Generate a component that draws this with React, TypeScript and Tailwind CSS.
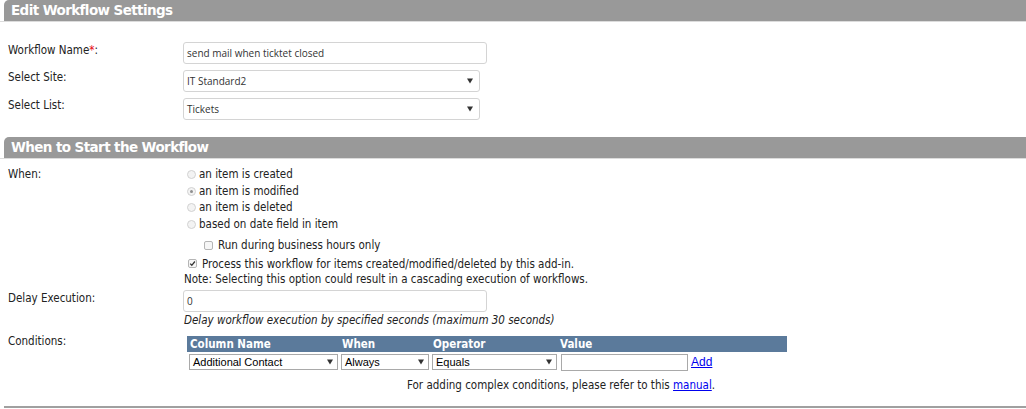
import React from 'react'

const bodyFont = "font-['DejaVu_Sans_Condensed','DejaVu_Sans',sans-serif]"

function Arrow() {
  return (
    <svg width="6" height="6" viewBox="0 0 6 6" className="shrink-0">
      <path d="M0 0.5h6L3 5.5z" fill="#333" />
    </svg>
  )
}

function Radio({ checked }: { checked?: boolean }) {
  return (
    <span className="w-[9px] h-[9px] rounded-full border border-[#d2d2d2] bg-[#f3f3f3] flex items-center justify-center mr-[3px] shrink-0">
      {checked && <span className="w-[3px] h-[3px] rounded-full bg-[#8f8f8f]" />}
    </span>
  )
}

function Check({ checked }: { checked?: boolean }) {
  return (
    <span className="w-[9px] h-[9px] rounded-[2px] border border-[#b5b5b5] bg-[#f6f6f6] flex items-center justify-center shrink-0">
      {checked && (
        <svg width="7" height="7" viewBox="0 0 7 7">
          <path d="M1.2 3.6l1.6 1.7L5.9 1.5" stroke="#333" strokeWidth="1.3" fill="none" />
        </svg>
      )}
    </span>
  )
}

function SectionHeader({ title }: { title: string }) {
  return (
    <div className="border-b border-[#dcdcdc]">
      <div className="ml-1 h-[21px] rounded-tl-[5px] bg-[#999999] pl-[7px] text-[13.5px] leading-[21px] font-bold text-white font-['DejaVu_Sans',sans-serif] tracking-[-0.6px]">
        {title}
      </div>
    </div>
  )
}

function Row({ label, children, className }: { label: React.ReactNode; children: React.ReactNode; className?: string }) {
  return (
    <div className={`flex ${className ?? ''}`}>
      <div className="w-[183px] shrink-0 pl-2 leading-[15px]">{label}</div>
      <div>{children}</div>
    </div>
  )
}

function TextBox({ value, width }: { value: string; width: string }) {
  return (
    <div className={`${width} h-[22px] rounded-[3px] border border-[#d4d4d4] flex items-center pl-[3px] text-[10px] text-[#333] font-['Open_Sans',sans-serif]`}>
      {value}
    </div>
  )
}

function SelectBox({ value }: { value: string }) {
  return (
    <div className="w-[297px] h-[22px] rounded-[3px] border border-[#d4d4d4] flex items-center justify-between pl-[3px] pr-[6px] text-[10px] text-[#333] font-['Open_Sans',sans-serif]">
      <span>{value}</span>
      <Arrow />
    </div>
  )
}

function SmallSelect({ value, width }: { value: string; width: string }) {
  return (
    <div className={`${width} h-[16px] border border-[#a9a9a9] flex items-center justify-between pl-[3px] pr-[4px] text-[11px] text-black font-['Liberation_Sans',sans-serif]`}>
      <span>{value}</span>
      <Arrow />
    </div>
  )
}

export default function App() {
  return (
    <div className={`w-[1026px] h-[409px] bg-white overflow-hidden text-[#222] text-[11.5px] ${bodyFont}`}>
      <SectionHeader title="Edit Workflow Settings" />

      <div className="flex flex-col gap-[6px] pt-[20px] pb-[17px]">
        <Row label={<span className="relative top-[1px]">Workflow Name<span className="text-red-600">*</span>:</span>}>
          <TextBox value="send mail when ticktet closed" width="w-[304px]" />
        </Row>
        <Row label="Select Site:">
          <SelectBox value="IT Standard2" />
        </Row>
        <Row label="Select List:">
          <SelectBox value="Tickets" />
        </Row>
      </div>

      <SectionHeader title="When to Start the Workflow" />

      <div className="pt-[7px]">
        <Row label={<span className="relative top-[1px]">When:</span>}>
          <div className="flex flex-col leading-[16.7px] pl-[4px]">
            <label className="flex items-center"><Radio />an item is created</label>
            <label className="flex items-center"><Radio checked />an item is modified</label>
            <label className="flex items-center"><Radio />an item is deleted</label>
            <label className="flex items-center"><Radio />based on date field in item</label>
            <label className="flex items-center gap-[5px] pl-[17px] mt-[4px]"><Check />Run during business hours only</label>
            <label className="flex items-center gap-[5px] pl-[1px] mt-[2px]"><Check checked />Process this workflow for items created/modified/deleted by this add-in.</label>
          </div>
          <div className="leading-[15px] pl-[1px]">Note: Selecting this option could result in a cascading execution of workflows.</div>
        </Row>

        <Row label={<span className="relative top-[1px]">Delay Execution:</span>} className="mt-[3px]">
          <TextBox value="0" width="w-[304px]" />
          <div className="italic leading-[15px] pt-[1px] pl-[1px]">Delay workflow execution by specified seconds (maximum 30 seconds)</div>
        </Row>

        <Row label={<span className="relative top-[2px]">Conditions:</span>} className="mt-[4px]">
          <div className="pl-[4px] pt-[4px]">
            <div className="w-[600px] h-[16px] bg-[#5b7a9b] grid grid-cols-[155px_91px_127px_1fr] items-center text-white font-bold text-[11.5px] leading-[16px]">
              <span className="pl-[3px]">Column Name</span>
              <span>When</span>
              <span>Operator</span>
              <span>Value</span>
            </div>
            <div className="flex items-center gap-[3px] mt-[1px] pl-[2px]">
              <SmallSelect value="Additional Contact" width="w-[149px]" />
              <SmallSelect value="Always" width="w-[88px]" />
              <SmallSelect value="Equals" width="w-[125px]" />
              <div className="w-[127px] h-[17px] border border-[#a9a9a9] ml-[1px]" />
              <a href="#" className="text-[12px] text-[#0000ee] underline font-['Liberation_Sans',sans-serif]">Add</a>
            </div>
            <div className="pl-[220px] pt-[7px] leading-[15px]">
              For adding complex conditions, please refer to this <a href="#" className="text-[#0000ee] underline">manual</a>.
            </div>
          </div>
        </Row>
      </div>

      <div className="ml-1 mt-[13px] border-t-2 border-[#a0a0a0]" />
    </div>
  )
}
